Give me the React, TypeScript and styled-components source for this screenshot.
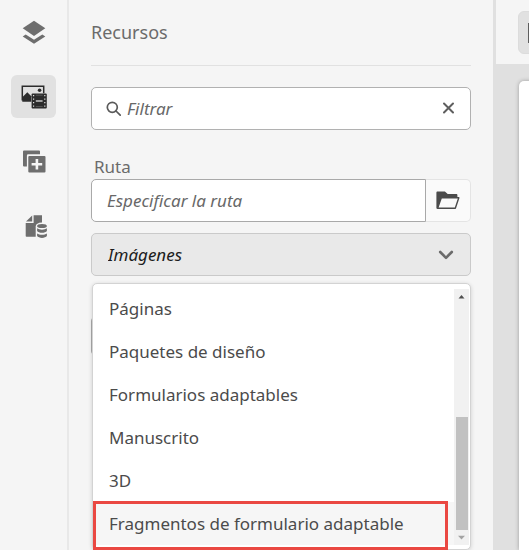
import React, { useState } from 'react';
import styled, { createGlobalStyle } from 'styled-components';

const GlobalStyle = createGlobalStyle`
  *, *::before, *::after { box-sizing: border-box; }
  body { margin: 0; overflow: hidden; background: #f5f5f5; }
  body, button, input, select { font-family: 'Noto Sans', 'Open Sans', sans-serif; }
`;

const Page = styled.div`
  display: flex;
  height: 100vh;
  overflow: hidden;
  background: #f5f5f5;
`;

const Rail = styled.nav`
  display: flex;
  flex-direction: column;
  align-items: center;
  gap: 22px;
  flex: 0 0 69px;
  padding-top: 10px;
  border-right: 2px solid #e8e8e8;
`;

const RailButton = styled.button<{ $active?: boolean }>`
  display: flex;
  align-items: center;
  justify-content: center;
  width: 45px;
  height: 43px;
  padding: 0;
  border: 0;
  border-radius: 6px;
  background: ${(p) => (p.$active ? '#e1e1e1' : 'transparent')};
  color: ${(p) => (p.$active ? '#2c2c2c' : '#6e6e6e')};
`;

const Panel = styled.main`
  flex: 1;
  min-width: 0;
  padding: 0 22px;
`;

const Title = styled.h1`
  margin: 0 0 21px;
  height: 66px;
  border-bottom: 1px solid #e1e1e1;
  color: #6b6b6b;
  font-size: 18px;
  font-weight: 400;
  line-height: 64px;
`;

const SearchBox = styled.div`
  display: flex;
  align-items: center;
  gap: 6px;
  height: 43px;
  padding: 0 14px;
  border: 1px solid #b1b1b1;
  border-radius: 5px;
  background: #fff;
  color: #5a5a5a;
`;

const TextInput = styled.input`
  flex: 1;
  min-width: 0;
  padding: 0;
  border: 0;
  outline: 0;
  background: transparent;
  font-size: 17px;
  font-style: italic;
  &::placeholder { color: #686868; opacity: 1; }
`;

const IconButton = styled.button`
  display: flex;
  padding: 0;
  border: 0;
  background: transparent;
  color: #5e5e5e;
`;

const Label = styled.label`
  display: block;
  margin-top: 24px;
  padding-left: 3px;
  color: #6b6b6b;
  font-size: 17px;
  line-height: 25px;
`;

const PathRow = styled.div`
  display: flex;
  height: 43px;
`;

const PathInput = styled(TextInput)`
  padding: 0 15px;
  border: 1px solid #a9a9a9;
  border-radius: 5px 0 0 5px;
  background: #fff;
`;

const BrowseButton = styled.button`
  display: flex;
  align-items: center;
  justify-content: center;
  width: 45px;
  padding: 0;
  border: 1px solid #e4e4e4;
  border-left: 0;
  border-radius: 0 5px 5px 0;
  background: #fafafa;
  color: #4b4b4b;
`;

const Dropdown = styled.div`
  position: relative;
  margin-top: 11px;
`;

const TypeSelect = styled.select`
  display: block;
  appearance: none;
  width: 100%;
  height: 43px;
  padding: 0 16px;
  border: 1px solid #cacaca;
  border-radius: 5px;
  outline: 0;
  background: #e9e9e9;
  color: #1c1c1c;
  font-size: 17px;
  font-style: italic;
`;

const Chevron = styled.svg`
  position: absolute;
  top: 17px;
  right: 17px;
  pointer-events: none;
`;

const Popup = styled.div`
  position: absolute;
  z-index: 1;
  top: 50px;
  left: 1px;
  right: 0;
  display: flex;
  padding: 3px 1px 4px 0;
  border: 1px solid #d3d3d3;
  border-radius: 5px;
  background: #fff;
  box-shadow: 0 1px 4px rgba(0, 0, 0, 0.16);
`;

const Options = styled.ul`
  flex: 1;
  margin: 0;
  padding: 0;
  list-style: none;
`;

const Option = styled.li<{ $marked?: boolean }>`
  position: relative;
  padding: 0 16px;
  background: ${(p) => (p.$marked ? '#f6f6f6' : 'transparent')};
  color: #4b4b4b;
  font-size: 17px;
  line-height: 43px;
  white-space: nowrap;
`;

const Marker = styled.span`
  position: absolute;
  inset: -1px 6px -5px 0;
  border: 3px solid #ea4842;
`;

const Scrollbar = styled.div`
  display: flex;
  flex-direction: column;
  align-items: center;
  justify-content: space-between;
  width: 15px;
  margin-top: 2px;
  background: #f1f1f1;
  color: #505050;
`;

const ScrollSpace = styled.div`
  flex: 1;
  display: flex;
  flex-direction: column;
  justify-content: flex-end;
`;

const Thumb = styled.div`
  width: 12px;
  height: 50%;
  background: #c1c1c1;
`;

const HiddenField = styled.div`
  height: 40px;
  margin-top: 40px;
  border: 1px solid #a9a9a9;
  border-radius: 5px;
`;

const Workspace = styled.aside`
  display: flex;
  flex-direction: column;
  flex: 0 0 36px;
  padding-left: 3px;
  background: #e0e0e0;
  overflow: hidden;
`;

const Toolbar = styled.div`
  height: 64px;
  padding: 11px 0 0 22px;
  background: #f5f5f5;
`;

const ToolButton = styled.button`
  display: flex;
  align-items: center;
  width: 44px;
  height: 43px;
  padding: 0 9px;
  border: 1px solid #dcdcdc;
  border-radius: 6px;
  background: #e1e1e1;
  color: #5e5e5e;
`;

const Sheet = styled.div`
  flex: 1;
  width: 80px;
  margin: 17px 0 0 23px;
  border-radius: 5px 0 0 0;
  background: #fff;
  box-shadow: 0 0 4px rgba(0, 0, 0, 0.3);
`;

const LayersIcon = () => (
  <svg width="24" height="24" viewBox="0 0 24 24" fill="currentColor" aria-hidden="true">
    <path d="M12 .7 23.3 8.2 12 16 .7 8.2Z" />
    <path d="m.7 16.5 3-2.1L12 19.8l8.3-5.4 3 2.1L12 23.8Z" />
  </svg>
);

const MediaIcon = () => (
  <svg width="26" height="24" viewBox="0 0 26 24" aria-hidden="true">
    <path d="M1.3 15.5V1.3h21.4v7" fill="none" stroke="currentColor" strokeWidth="1.5" />
    <path d="M1.3 12.2 6.3 7.2l4 4V16.8h-9Z" fill="currentColor" />
    <circle cx="18.6" cy="5.3" r="1.8" fill="currentColor" />
    <rect x="10.6" y="8.4" width="15.2" height="15" rx="1" fill="currentColor" />
    <path d="M12.6 10v12M23.8 10v12" stroke="#e1e1e1" strokeWidth="1.2" strokeDasharray="1.3 2.2" />
    <path d="M14.8 16h6.8" stroke="#e1e1e1" strokeWidth="1.3" />
    <path d="M14.8 10.2h6.8M14.8 21.6h6.8" stroke="#777" strokeWidth=".6" />
  </svg>
);

const AddCopyIcon = () => (
  <svg width="24" height="24" viewBox="0 0 24 24" fill="currentColor" aria-hidden="true">
    <path d="M2 .5h15a1 1 0 0 1 1 1v2.8H6.2a1.3 1.3 0 0 0-1.3 1.3v11H2a1 1 0 0 1-1-1V1.500a1 1 0 0 1 1-1Z" />
    <rect x="6.3" y="6" width="17.2" height="16.5" rx="1" />
    <path d="M14.9 9v10.6M9.600 14.3h10.6" stroke="#f5f5f5" strokeWidth="2.6" />
  </svg>
);

const DataDocIcon = () => (
  <svg width="26" height="24" viewBox="-3 1 26 24" fill="currentColor" aria-hidden="true">
    <path d="M8.200 1.4v6.200H2Z" />
    <path d="M9.600 1.200H18v7.300c-4 .2-6.300 1.600-6.300 3.700v10.600H2.500a.8.8 0 0 1-.8-.8V9h7.900Z" />
    <ellipse cx="18" cy="12" rx="4.900" ry="2.100" />
    <path d="M13.100 14.300c2.300 1.800 7.500 1.800 9.800 0v2.700c-1.400 2.400-8.400 2.400-9.800 0Z" />
    <path d="M13.100 19.400c2.300 1.800 7.500 1.800 9.800 0v2.700c-1.400 2.400-8.400 2.400-9.800 0Z" />
  </svg>
);

const SearchIcon = () => (
  <svg width="15" height="15" viewBox="0 0 15 15" fill="none" stroke="currentColor" strokeWidth="1.7" aria-hidden="true">
    <circle cx="6.3" cy="6.3" r="5" />
    <path d="m10 10 4.200 4.200" strokeLinecap="round" />
  </svg>
);

const CloseIcon = () => (
  <svg width="15" height="15" viewBox="0 0 15 15" fill="none" stroke="currentColor" strokeWidth="2" strokeLinecap="round" aria-hidden="true">
    <path d="m3 2.500 9 9M12 2.500l-9 9" />
  </svg>
);

const FolderIcon = () => (
  <svg width="24" height="19" viewBox="0 0 24 19" aria-hidden="true">
    <path d="M.4 17.5V1.7C.4 1 .8.5 1.6.5h7.300L11.700 3h8.600c.7 0 1.100.4 1.100 1.100V6H5.700L2.200 17.500Z" fill="currentColor" />
    <path d="M5.300 6.700h17.500l-3.500 10.600H1.600Z" fill="#fafafa" stroke="currentColor" strokeWidth="1.4" strokeLinejoin="round" />
  </svg>
);

const tools = [
  { name: 'Árbol de contenido', icon: <LayersIcon /> },
  { name: 'Recursos', icon: <MediaIcon /> },
  { name: 'Componentes', icon: <AddCopyIcon /> },
  { name: 'Fuentes de datos', icon: <DataDocIcon /> },
];

const assetTypes = [
  'Páginas',
  'Paquetes de diseño',
  'Formularios adaptables',
  'Manuscrito',
  '3D',
  'Fragmentos de formulario adaptable',
];

export default function App() {
  const [tool, setTool] = useState('Recursos');
  const [filter, setFilter] = useState('');
  const [type, setType] = useState('Imágenes');
  const [open, setOpen] = useState(true);

  return (
    <>
      <GlobalStyle />
      <Page>
        <Rail>
          {tools.map((t) => (
            <RailButton key={t.name} type="button" aria-label={t.name} $active={tool === t.name} onClick={() => setTool(t.name)}>
              {t.icon}
            </RailButton>
          ))}
        </Rail>
        <Panel>
          <Title>Recursos</Title>
          <SearchBox>
            <SearchIcon />
            <TextInput aria-label="Filtrar" placeholder="Filtrar" value={filter} onChange={(e) => setFilter(e.target.value)} />
            <IconButton type="button" aria-label="Borrar" onClick={() => setFilter('')}>
              <CloseIcon />
            </IconButton>
          </SearchBox>
          <Label htmlFor="path">Ruta</Label>
          <PathRow>
            <PathInput id="path" placeholder="Especificar la ruta" />
            <BrowseButton type="button" aria-label="Examinar">
              <FolderIcon />
            </BrowseButton>
          </PathRow>
          <Dropdown>
            <TypeSelect
              aria-label="Tipo de recurso"
              value={type}
              onMouseDown={(e) => {
                e.preventDefault();
                setOpen(!open);
              }}
              onChange={(e) => setType(e.target.value)}
            >
              {['Imágenes', ...assetTypes].map((name) => (
                <option key={name}>{name}</option>
              ))}
            </TypeSelect>
            <Chevron width="16" height="11" viewBox="0 0 16 11" fill="none" stroke="#6b6b6b" strokeWidth="2.6" strokeLinecap="round" strokeLinejoin="round" aria-hidden="true">
              <path d="m2.2 2 5.8 5.8L13.8 2" />
            </Chevron>
            {open && (
              <Popup>
                <Options role="listbox" aria-label="Tipos de recurso">
                  {assetTypes.map((name) => {
                    const marked = name === 'Fragmentos de formulario adaptable';
                    return (
                      <Option
                        key={name}
                        role="option"
                        aria-selected={type === name}
                        $marked={marked}
                        onClick={() => {
                          setType(name);
                          setOpen(false);
                        }}
                      >
                        {name}
                        {marked && <Marker />}
                      </Option>
                    );
                  })}
                </Options>
                <Scrollbar aria-hidden="true">
                  <svg width="15" height="15" viewBox="0 0 15 15" fill="currentColor">
                    <path d="m7.5 6 3 3.4h-6Z" />
                  </svg>
                  <ScrollSpace>
                    <Thumb />
                  </ScrollSpace>
                  <svg width="15" height="15" viewBox="0 0 15 15" fill="#a3a3a3">
                    <path d="m7.5 9.600 3.500-3.800H4Z" />
                  </svg>
                </Scrollbar>
              </Popup>
            )}
          </Dropdown>
          <HiddenField />
        </Panel>
        <Workspace>
          <Toolbar>
            <ToolButton type="button" aria-label="Panel lateral">
              <svg width="24" height="20" viewBox="0 0 24 20" fill="none" stroke="currentColor" strokeWidth="2" aria-hidden="true">
                <path d="M1 1h22v18H1ZM8 1v18" />
              </svg>
            </ToolButton>
          </Toolbar>
          <Sheet />
        </Workspace>
      </Page>
    </>
  );
}
